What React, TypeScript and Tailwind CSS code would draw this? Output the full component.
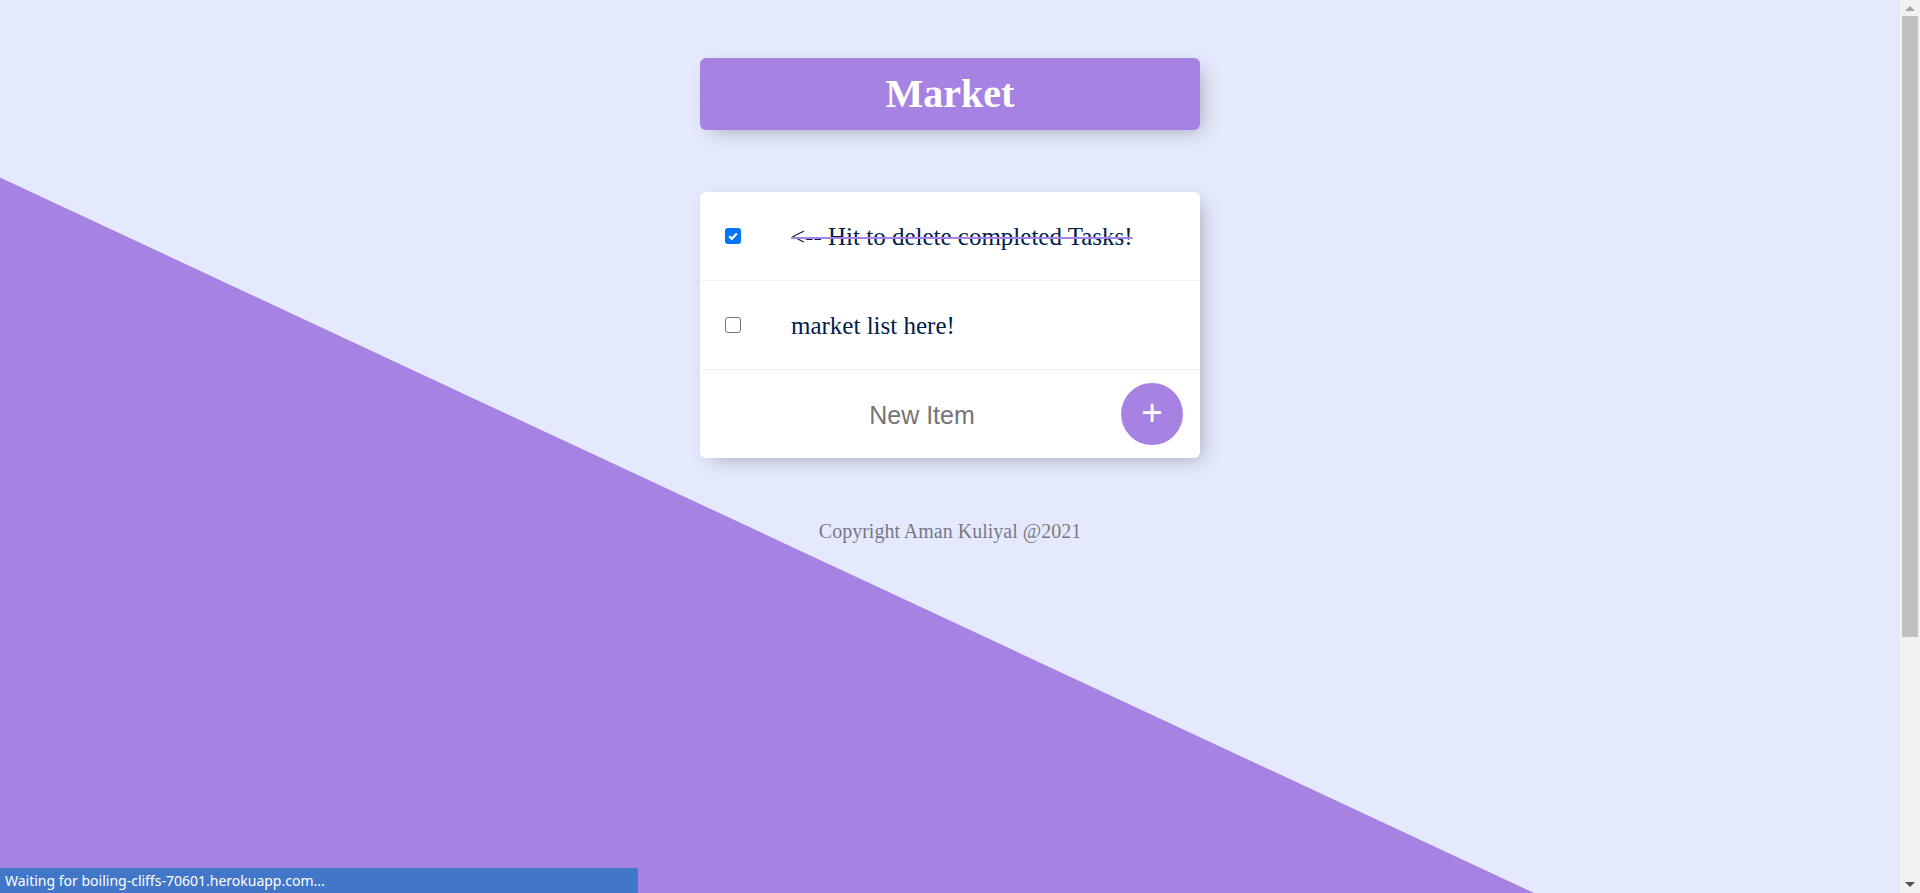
function Scrollbar() {
  return (
    <div className="flex h-full w-[20px] flex-col items-center bg-[#f1f1f1]">
      <div className="flex h-[16px] w-full items-center justify-center">
        <span className="h-0 w-0 border-x-[5px] border-b-[5px] border-x-transparent border-b-[#a3a3a3]" />
      </div>
      <div className="h-[621px] w-[16px] bg-[#c1c1c1]" />
      <div className="flex-1" />
      <div className="flex h-[17px] w-full items-start justify-center pt-[6px]">
        <span className="h-0 w-0 border-x-[5px] border-t-[5px] border-x-transparent border-t-[#505050]" />
      </div>
    </div>
  )
}

function Item({ text, done }: { text: string; done: boolean }) {
  return (
    <div className="flex h-[89px] items-center border-b border-[#f1f1f1]">
      {done ? (
        <span className="mx-[25px] flex h-4 w-4 items-center justify-center rounded-[3px] bg-[#0075ff]">
          <svg width="12" height="12" viewBox="0 0 12 12">
            <path d="M2.2 6.2 L4.8 8.8 L9.8 3.4" fill="none" stroke="#fff" strokeWidth="2.2" />
          </svg>
        </span>
      ) : (
        <span className="mx-[25px] h-4 w-4 rounded-[3px] border border-[#767676] bg-white" />
      )}
      <p
        className={
          done
            ? "px-[25px] font-['Liberation_Serif',serif] text-[25px] leading-[29px] text-[#00204a] line-through decoration-[#a683e3] decoration-2"
            : "px-[25px] font-['Liberation_Serif',serif] text-[25px] leading-[29px] text-[#00204a]"
        }
      >
        {text}
      </p>
    </div>
  )
}

export default function App() {
  return (
    <div className="flex h-[893px] w-full overflow-hidden bg-[#e4e9fd]">
      <main className="relative h-full flex-1">
        <svg className="absolute inset-0" width="1900" height="893" viewBox="0 0 1900 893">
          <polygon points="0,177.5 1534,893 0,893" fill="#a683e3" />
        </svg>

        <div className="relative flex flex-col items-center pt-[58px]">
          <div className="flex h-[72px] w-[500px] items-center justify-center rounded-[6px] bg-[#a683e3] shadow-[6px_6px_19px_-6px_rgba(0,0,0,0.3)]">
            <h1 className="font-['Liberation_Serif',serif] text-[40px] font-bold leading-[46px] text-white">Market</h1>
          </div>

          <section className="mt-[62px] w-[500px] rounded-[6px] bg-white shadow-[6px_6px_19px_-6px_rgba(0,0,0,0.3)]">
            <Item text="<-- Hit to delete completed Tasks!" done />
            <Item text="market list here!" done={false} />
            <form className="flex h-[88px] items-center pl-[25px]">
              <input
                type="text"
                placeholder="New Item"
                className="mt-[2px] h-[75px] w-[394px] bg-transparent text-center font-['Liberation_Sans',Arial,sans-serif] text-[25px] text-[#00204a] outline-none placeholder:text-[#757575]"
              />
              <button
                type="button"
                className="ml-[2px] flex h-[62px] w-[62px] items-center justify-center rounded-full bg-[#a683e3] pb-[4px] font-['Liberation_Sans',Arial,sans-serif] text-[37px] leading-none text-white"
              >
                +
              </button>
            </form>
          </section>

          <footer className="mt-[62px] text-center font-['Liberation_Serif',serif] text-[20px] leading-[23px] text-black/50">
            Copyright Aman Kuliyal @2021
          </footer>
        </div>

        <div className="absolute bottom-0 left-0 flex h-[25px] w-[638px] items-center rounded-tr-[3px] bg-[#4176c8] pl-[5px] font-['Noto_Sans',sans-serif] text-[14px] text-white">
          Waiting for boiling-cliffs-70601.herokuapp.com...
        </div>
      </main>
      <Scrollbar />
    </div>
  )
}
